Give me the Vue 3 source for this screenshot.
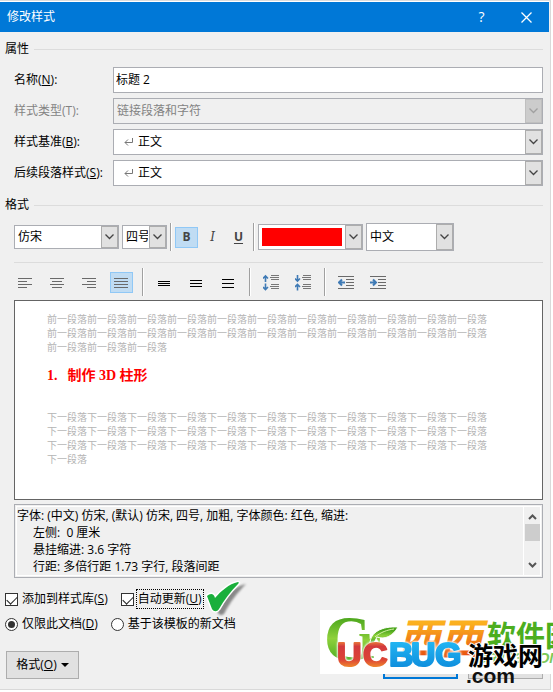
<template>
  <div class="page">
    <div class="dialog" role="dialog" aria-labelledby="dlg-title">
      <header class="titlebar">
        <h1 id="dlg-title">修改样式</h1>
        <button class="title-btn" aria-label="帮助">?</button>
        <button class="title-btn" aria-label="关闭">
          <svg width="11" height="11" viewBox="0 0 11 11"><path d="M.5 .5l10 10M10.5 .5l-10 10" stroke="#fff" stroke-width="1.3" /></svg>
        </button>
      </header>

      <main class="body">
        <h2 class="group-title">属性</h2>
        <div class="fields">
          <label for="name">名称(<u>N</u>):</label>
          <input id="name" v-model="name" class="text-input" type="text" />

          <label for="kind" class="muted">样式类型(T):</label>
          <div class="combo disabled">
            <select id="kind" disabled><option>链接段落和字符</option></select>
            <span class="arrow"><svg width="9" height="6" viewBox="0 0 9 6"><path d="M.5 .5l4 4 4-4" /></svg></span>
          </div>

          <template v-for="f in styleFields" :key="f.id">
            <label :for="f.id">{{ f.label }}(<u>{{ f.key }}</u>):</label>
            <div class="combo with-mark">
              <select :id="f.id"><option>正文</option></select>
              <svg class="mark" width="10" height="8" viewBox="0 0 10 8">
                <path d="M8.5 0v4.5H1M4 1.5l-3 3 3 3" />
              </svg>
              <span class="arrow"><svg width="9" height="6" viewBox="0 0 9 6"><path d="M.5 .5l4 4 4-4" /></svg></span>
            </div>
          </template>
        </div>

        <h2 class="group-title second">格式</h2>
        <div class="toolbar fonts">
          <div v-for="c in fontCombos" :key="c.cls" class="combo" :class="c.cls">
            <select :aria-label="c.label"><option>{{ c.value }}</option></select>
            <span class="arrow"><svg width="9" height="6" viewBox="0 0 9 6"><path d="M.5 .5l4 4 4-4" /></svg></span>
          </div>
          <span class="sep"></span>
          <button class="tool bold" :class="{ active: bold }" aria-label="加粗" @click="bold = !bold">B</button>
          <button class="tool italic" :class="{ active: italic }" aria-label="倾斜" @click="italic = !italic">I</button>
          <button class="tool under" :class="{ active: under }" aria-label="下划线" @click="under = !under">U</button>
          <span class="sep"></span>
          <div class="combo color">
            <select aria-label="字体颜色"><option>红色</option></select>
            <span class="arrow"><svg width="9" height="6" viewBox="0 0 9 6"><path d="M.5 .5l4 4 4-4" /></svg></span>
          </div>
          <div class="combo script">
            <select aria-label="文字类型"><option>中文</option></select>
            <span class="arrow"><svg width="9" height="6" viewBox="0 0 9 6"><path d="M.5 .5l4 4 4-4" /></svg></span>
          </div>
        </div>

        <div class="toolbar para">
          <button v-for="a in aligns" :key="a.label" class="tool" :class="{ active: align === a.label }" :aria-label="a.label" @click="align = a.label">
            <svg width="15" height="15" viewBox="0 0 15 15"><path :d="a.d" stroke="#6a6a6a" /></svg>
          </button>
          <span class="sep"></span>
          <button v-for="s in spacings" :key="s.label" class="tool" :aria-label="s.label">
            <svg width="15" height="15" viewBox="0 0 15 15"><path :d="s.d" stroke="#000" /></svg>
          </button>
          <span class="sep"></span>
          <button v-for="s in paraSpacings" :key="s.label" class="tool" :aria-label="s.label">
            <svg width="17" height="17" viewBox="0 0 17 17">
              <path d="M8 1.5h8M7 3.5h9M8 5.5h8M8 10.5h8M7 12.5h9M8 14.5h8" stroke="#777" />
              <path :d="s.d" stroke="#3f7ab5" stroke-width="1.6" />
            </svg>
          </button>
          <span class="sep"></span>
          <button v-for="s in indents" :key="s.label" class="tool" :aria-label="s.label">
            <svg width="17" height="17" viewBox="0 0 17 17">
              <path d="M0 2.5h16M8 5.5h8M8 8.5h8M8 11.5h8M0 14.5h16" stroke="#6a6a6a" />
              <path :d="s.d" stroke="#3f7ab5" stroke-width="2" />
            </svg>
          </button>
        </div>

        <section class="preview">
          <p>{{ '前一段落'.repeat(25) }}</p>
          <h3><span>1.</span>制作 3D 柱形</h3>
          <p>{{ '下一段落'.repeat(34) }}</p>
        </section>

        <section class="summary">
          <div class="summary-text">
            <p>字体: (中文) 仿宋, (默认) 仿宋, 四号, 加粗, 字体颜色: 红色, 缩进:</p>
            <p class="sub">左侧:&nbsp; 0 厘米</p>
            <p class="sub">悬挂缩进: 3.6 字符</p>
            <p class="sub">行距: 多倍行距 1.73 字行, 段落间距</p>
          </div>
          <div class="scrollbar">
            <svg width="9" height="6" viewBox="0 0 9 6"><path d="M1 5l3.500-3.500L8 5" /></svg>
            <span class="thumb"></span>
            <svg class="down" width="9" height="6" viewBox="0 0 9 6"><path d="M1 1l3.500 3.500L8 1" /></svg>
          </div>
        </section>

        <div class="options">
          <label><input v-model="addToGallery" type="checkbox" /><span>添加到样式库(<u>S</u>)</span></label>
          <label class="focused">
            <input v-model="autoUpdate" type="checkbox" /><span>自动更新(<u>U</u>)</span>
            <svg class="tick" width="44" height="38" viewBox="0 0 44 38">
              <path class="tick-shadow" d="M9 21C12 19 15 19 16 23C22 15 32 7 42 5C34 13 26 23 20 35C17 37 15 36 14 34Z" fill="#888" />
              <path d="M3 17C6 14 10 14 11 19C17 12 25 5 34 3C35 3 35 4 34 5C26 13 20 21 15 30C13 33 10 33 8 30Z" fill="#1aaf3c" stroke="#fff" stroke-width="3" paint-order="stroke" stroke-linejoin="round" />
            </svg>
          </label>
        </div>
        <div class="options radios">
          <label><input v-model="scope" type="radio" value="doc" /><span>仅限此文档(<u>D</u>)</span></label>
          <label><input v-model="scope" type="radio" value="template" /><span>基于该模板的新文档</span></label>
        </div>

        <footer class="footer">
          <button class="btn format"><span>格式(<u>O</u>)</span><i class="caret"></i></button>
          <button class="btn ok" aria-label="确定"></button>
          <button class="btn cancel" aria-label="取消"></button>
        </footer>
      </main>
    </div>

    <svg class="watermark" width="233" height="80" viewBox="0 0 233 80">
      <defs>
        <linearGradient id="leaf" x1="0" y1="0" x2="0" y2="1">
          <stop offset="0.2" stop-color="#4aa51c" /><stop offset=".5" stop-color="#8fd13c" /><stop offset=".8" stop-color="#4fae22" />
        </linearGradient>
        <linearGradient id="orange" x1="0" y1="0" x2="0" y2="1">
          <stop offset="0.3" stop-color="#fbb01f" /><stop offset=".85" stop-color="#e8500f" />
        </linearGradient>
        <linearGradient id="red" x1="0" y1="0" x2="0" y2="1">
          <stop offset="0.15" stop-color="#f08a3a" /><stop offset=".3" stop-color="#d33a3d" /><stop offset=".65" stop-color="#dc4436" /><stop offset=".85" stop-color="#f08a2c" />
        </linearGradient>
        <linearGradient id="blue" x1="0" y1="0" x2="0" y2="1">
          <stop offset="0.2" stop-color="#22b4f2" /><stop offset="1" stop-color="#0a86d8" />
        </linearGradient>
      </defs>
      <rect width="233" height="64" fill="#fff" />
      <g class="crest" fill="url(#leaf)">
        <text x="4" y="50">C</text>
        <text class="crest-r" x="38" y="48">r</text>
        <path d="M50 34C50 22 62 16 78 17C73 26 65 30 57 27L53 35Z" stroke="#fff" stroke-width="1" />
        <path d="M55 27C61 22 67 20 74 19" fill="none" stroke="#d8f2a8" stroke-width="1" />
      </g>
      <text class="xixi" x="78" y="44">西西</text>
      <text class="soft" x="167" y="37">软件园</text>
      <text class="domain" x="156" y="53">CR173.COM</text>
      <g class="ucbug">
        <text class="red" x="17 43" y="56">UC</text>
        <text class="blue" x="69 91 115" y="56">BUG</text>
      </g>
      <text class="game" x="148" y="55">游戏网</text>
      <text class="com" x="146" y="73">.com</text>
    </svg>
  </div>
</template>

<script setup>
import { ref } from 'vue'

const name = ref('标题 2')
const bold = ref(true)
const italic = ref(false)
const under = ref(false)
const align = ref('两端对齐')
const addToGallery = ref(true)
const autoUpdate = ref(true)
const scope = ref('doc')

const styleFields = [
  { id: 'base', label: '样式基准', key: 'B' },
  { id: 'next', label: '后续段落样式', key: 'S' },
]

const fontCombos = [
  { cls: 'family', label: '字体', value: '仿宋' },
  { cls: 'size', label: '字号', value: '四号' },
]

// --- ícones da barra de parágrafo
const aligns = [
  { label: '左对齐', d: 'M0 3.5h14M0 6.500h9M0 9.500h14M0 12.500h9' },
  { label: '居中', d: 'M0 3.500h14M2 6.500h10M0 9.500h14M2 12.500h10' },
  { label: '右对齐', d: 'M0 3.500h14M5 6.500h9M0 9.500h14M5 12.500h9' },
  { label: '两端对齐', d: 'M0 3.500h14M0 6.500h14M0 9.500h14M0 12.500h14' },
]
const spacings = [
  { label: '单倍行距', d: 'M1 6.500h12M1 8.500h12M1 10.500h12' },
  { label: '1.5 倍行距', d: 'M1 5.500h12M1 8.500h12M1 11.500h12' },
  { label: '2 倍行距', d: 'M1 4.500h12M1 8.500h12M1 12.500h12' },
]
const paraSpacings = [
  { label: '增加段落间距', d: 'M2.500 8V2M0 4.500l2.500-2.500 2.500 2.500M2.500 9.500v6M0 13l2.500 2.500 2.500-2.500' },
  { label: '减少段落间距', d: 'M2.500 1v6M0 4.500l2.500 2.500 2.500-2.500M2.500 16.500v-6M0 13l2.500-2.500 2.500 2.500' },
]
const indents = [
  { label: '减少缩进', d: 'M7 8.500H1M4 5.500l-3 3 3 3' },
  { label: '增加缩进', d: 'M0 8.500h6M3 5.500l3 3-3 3' },
]
</script>

<style>
body {
  margin: 0;
  background: #fff;
}
</style>

<style scoped>
.page {
  position: relative;
  overflow: hidden;
  padding-right: 2px;
  font-family: "Open Sans", "Noto Sans CJK SC", sans-serif;
  font-size: 12px;
  line-height: 18px;
  color: #000;
}
.page * {
  box-sizing: border-box;
}
.dialog {
  background: #f0f0f0;
  border-top: 1px solid #dcdcdc;
  border-right: 1px solid #d9d9d9;
  border-bottom: 1px solid #d9d9d9;
}
h1, h2, h3, p {
  margin: 0;
  font-size: 12px;
  font-weight: 400;
}
button, input, select {
  font: inherit;
  color: inherit;
}
svg {
  display: block;
  fill: none;
}

/* título */
.titlebar {
  display: flex;
  align-items: center;
  height: 31px;
  margin-right: 1px;
  padding-left: 7px;
  border-top: 1px solid #fff;
  background: #0078d7;
  color: #fff;
}
.titlebar h1 {
  flex: 1;
}
.title-btn {
  display: flex;
  align-items: center;
  justify-content: center;
  width: 45px;
  height: 30px;
  padding: 0;
  border: none;
  background: transparent;
  font-size: 14px;
}

.body {
  padding: 8px 7px 10px 5px;
}
.group-title {
  display: flex;
  align-items: center;
  gap: 5px;
}
.group-title::after {
  content: "";
  flex: 1;
  height: 1px;
  background: #dcdcdc;
}
.group-title.second {
  margin-top: 10px;
}
.fields {
  display: grid;
  grid-template-columns: 99px 1fr;
  grid-auto-rows: 26px;
  row-gap: 5px;
  align-items: center;
  margin-top: 9px;
  padding-left: 9px;
}
.muted {
  color: #838383;
}
.text-input {
  width: 100%;
  height: 26px;
  padding: 0 2px 2px;
  border: 1px solid #abadb3;
  border-radius: 0;
  background: #fff;
  outline: none;
}

/* caixas de seleção */
.combo {
  position: relative;
  height: 26px;
  border: 1px solid #abadb3;
  background: #fff;
}
.combo select {
  display: block;
  appearance: none;
  width: 100%;
  height: 100%;
  padding: 0 18px 0 3px;
  border: none;
  border-radius: 0;
  background: transparent;
  outline: none;
}
.arrow {
  position: absolute;
  top: 0;
  right: 0;
  bottom: 0;
  display: flex;
  align-items: center;
  justify-content: center;
  width: 17px;
  border: 1px solid #adadad;
  background: #e1e1e1;
  pointer-events: none;
}
.arrow path {
  stroke: #444;
  stroke-width: 1.3;
}
.combo.disabled {
  background: #f0f0f0;
  color: #838383;
}
.combo.disabled select {
  opacity: 1;
}
.disabled .arrow {
  background: #ccc;
  border-color: #bfbfbf;
}
.disabled .arrow path {
  stroke: #a0a0a0;
}
.with-mark select {
  padding-left: 24px;
}
.mark {
  position: absolute;
  left: 10px;
  top: 8px;
  pointer-events: none;
}
.mark path {
  stroke: #777;
}

/* barras */
.toolbar {
  display: flex;
  align-items: center;
  height: 28px;
  margin-left: 9px;
}
.fonts {
  gap: 3px;
  height: 40px;
  margin-top: 9px;
  padding-bottom: 11px;
  border-bottom: 1px solid #dcdcdc;
}
.para {
  gap: 9px;
  margin-top: 5px;
}
.family {
  flex: 0 0 105px;
  height: 24px;
}
.size {
  flex: 0 0 45px;
  height: 24px;
}
.color {
  flex: 0 0 105px;
}
.color select {
  padding: 3px 20px 3px 3px;
  background: #f00 content-box;
  color: #f00;
}
.script {
  flex: 0 0 88px;
  height: 28px;
}
.sep {
  width: 2px;
  height: 28px;
  border-left: 1px solid #a0a0a0;
  background: #fff;
}
.tool {
  display: flex;
  align-items: center;
  justify-content: center;
  width: 23px;
  height: 21px;
  padding: 0;
  border: 1px solid transparent;
  background: transparent;
  color: #444;
}
.tool svg {
  flex: none;
}
.tool.active {
  border-color: #90c8f6;
  background: #c0dcf3;
}
.bold {
  font-weight: 700;
}
.italic {
  font-family: "DejaVu Serif", serif;
  font-style: italic;
}
.under {
  font-weight: 700;
  text-decoration: underline;
  text-underline-offset: 2px;
}

.preview {
  min-height: 200px;
  margin: 4px 0 0 9px;
  padding: 11px 55px 0 32px;
  border: 1px solid #646464;
  background: #fff;
}
.preview p {
  font-family: "Noto Sans CJK SC", sans-serif;
  font-size: 10px;
  line-height: 14px;
  color: #b4b4b4;
  word-break: break-all;
}
.preview h3 {
  margin: 12px 0 24px;
  font-family: "Liberation Serif", "Noto Sans CJK SC", serif;
  font-size: 14px;
  font-weight: 700;
  line-height: 20px;
  color: #f00;
}
.preview h3 span {
  margin-right: 10px;
}

.summary {
  display: flex;
  height: 74px;
  margin: 4px 0 0 9px;
  padding: 1px;
  border: 1px solid #abadb3;
}
.summary-text {
  flex: 1;
  border: 1px solid #fff;
  line-height: 17px;
  overflow: hidden;
}
.sub {
  padding-left: 16px;
}
.scrollbar {
  display: flex;
  flex-direction: column;
  align-items: center;
  width: 17px;
  padding: 7px 0;
  border: 1px solid #fff;
  border-left: none;
}
.scrollbar path {
  stroke: #555;
  stroke-width: 2;
}
.thumb {
  width: 15px;
  height: 17px;
  margin-top: 4px;
  background: #cdcdcd;
}
.down {
  margin-top: auto;
}

/* opções */
.options {
  display: flex;
  gap: 13px;
  height: 20px;
  margin-top: 11px;
}
.options.radios {
  margin-top: 5px;
}
.options label {
  position: relative;
  display: flex;
  align-items: center;
  gap: 4px;
}
.options input {
  appearance: none;
  flex: none;
  width: 13px;
  height: 13px;
  margin: 0;
  border: 1px solid #333;
  background: #fff;
}
.options input[type="checkbox"]:checked::after {
  content: "";
  display: block;
  width: 9px;
  height: 5px;
  margin: 2px 0 0 1px;
  border-left: 1px solid #222;
  border-bottom: 1px solid #222;
  transform: rotate(-45deg);
}
.options input[type="radio"] {
  border-radius: 50%;
}
.options input[type="radio"]:checked::after {
  content: "";
  display: block;
  width: 7px;
  height: 7px;
  margin: 2px;
  border-radius: 50%;
  background: #333;
}
.options .focused {
  gap: 2px;
}
.focused span {
  padding: 0 1px;
  border: 1px dotted #000;
}
.tick {
  position: absolute;
  left: 100%;
  top: -10px;
  overflow: visible;
}
.tick-shadow {
  filter: blur(1px);
}

.footer {
  display: flex;
  gap: 10px;
  margin-top: 17px;
  padding-left: 1px;
}
.btn {
  width: 75px;
  height: 28px;
  padding: 0;
  border: 1px solid #adadad;
  background: #e1e1e1;
}
.format {
  display: flex;
  align-items: center;
  justify-content: center;
  gap: 4px;
  width: 73px;
  margin-right: auto;
}
.caret {
  border: 4px solid transparent;
  border-top-color: #000;
  border-bottom: none;
}
.ok {
  border: 2px solid #0078d7;
}

/* marca d'água */
.watermark {
  position: absolute;
  right: 0;
  bottom: 0;
  pointer-events: none;
}
.crest {
  font-family: "Liberation Serif", serif;
  font-size: 64px;
  font-weight: 700;
}
.crest-r {
  font-size: 52px;
}
.xixi {
  fill: url(#orange);
  font-family: "Noto Sans CJK SC", sans-serif;
  font-size: 42px;
  font-style: italic;
  font-weight: 700;
}
.soft {
  fill: #4cae1f;
  font-family: "Noto Sans CJK SC", sans-serif;
  font-size: 29px;
  font-weight: 700;
}
.domain {
  fill: #7cc95a;
  font-family: "Liberation Sans", sans-serif;
  font-size: 15px;
  font-style: italic;
  font-weight: 700;
}
.ucbug {
  filter: drop-shadow(0 0 1px #fff) drop-shadow(0 0 1px #fff);
  font-family: "Liberation Sans", sans-serif;
  font-size: 34px;
  font-weight: 700;
  stroke-width: 2px;
  stroke-linejoin: round;
}
.red {
  fill: url(#red);
  stroke: url(#red);
}
.blue {
  fill: url(#blue);
  stroke: url(#blue);
}
.game {
  fill: #000;
  stroke: #fff;
  stroke-width: 2px;
  paint-order: stroke;
  font-family: "Noto Sans CJK SC", sans-serif;
  font-size: 25px;
  font-weight: 700;
}
.com {
  fill: #111;
  font-family: "Liberation Sans", sans-serif;
  font-size: 21px;
  font-weight: 700;
}
</style>
